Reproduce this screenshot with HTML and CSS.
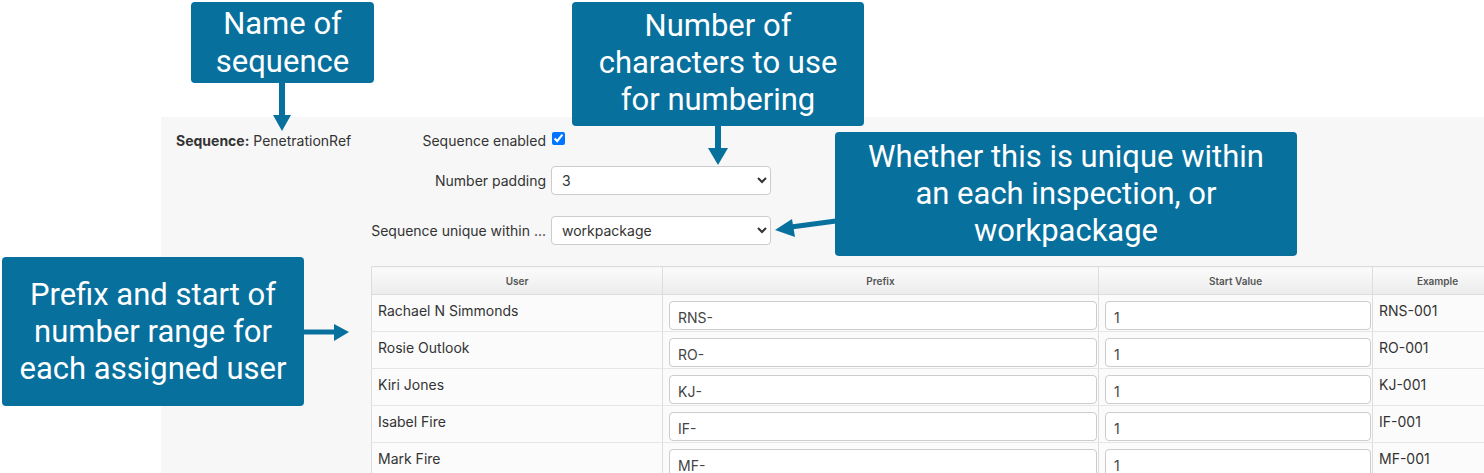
FILE: index.html
```html
<!DOCTYPE html>
<html lang="en">

<head>
    <meta charset="UTF-8">
    <title>Sequence settings</title>
    <link rel="stylesheet" href="styles.css">
</head>

<body>
    <div class="page">
        <!-- sequence panel -->
        <section class="panel">
            <div class="seq-name"><b>Sequence:</b> PenetrationRef</div>

            <div class="seq-form">
                <div class="form-row row-check">
                    <label>Sequence enabled</label>
                    <div><input type="checkbox" class="check" checked></div>
                </div>
                <div class="form-row">
                    <label>Number padding</label>
                    <select class="select">
                        <option>3</option>
                    </select>
                </div>
                <div class="form-row">
                    <label>Sequence unique within ...</label>
                    <select class="select">
                        <option>workpackage</option>
                    </select>
                </div>

                <table class="user-table">
                    <colgroup>
                        <col style="width: 291px">
                        <col style="width: 436px">
                        <col style="width: 274px">
                        <col style="width: 130px">
                    </colgroup>
                    <thead>
                        <tr>
                            <th>User</th>
                            <th>Prefix</th>
                            <th>Start Value</th>
                            <th>Example</th>
                        </tr>
                    </thead>
                    <tbody id="user-rows">
                    </tbody>
                </table>
            </div>
        </section>
    </div>

    <!-- callouts -->
    <div class="callout callout-name">Name of<br>sequence</div>
    <div class="callout callout-padding">Number of<br>characters to use<br>for numbering</div>
    <div class="callout callout-unique">Whether this is unique within<br>an each inspection, or<br>workpackage</div>
    <div class="callout callout-prefix">Prefix and start of<br>number range for<br>each assigned user</div>

    <svg class="arrows" width="1484" height="473" viewBox="0 0 1484 473">
        <g fill="#08709d" stroke="#08709d">
            <line x1="282" y1="83" x2="282" y2="116" stroke-width="6" />
            <polygon points="273,115 291,115 282,131" stroke="none" />

            <line x1="718" y1="126" x2="718" y2="149" stroke-width="6" />
            <polygon points="708,148 728,148 718,165" stroke="none" />

            <line x1="836" y1="221" x2="791" y2="227" stroke-width="5" />
            <polygon points="775,230 792,219 795,237" stroke="none" />

            <line x1="304" y1="332" x2="335" y2="332" stroke-width="5" />
            <polygon points="334,324 334,341 349,332" stroke="none" />
        </g>
    </svg>

    <script>
        const users = [
            { name: "Rachael N Simmonds", prefix: "RNS-" },
            { name: "Rosie Outlook", prefix: "RO-" },
            { name: "Kiri Jones", prefix: "KJ-" },
            { name: "Isabel Fire", prefix: "IF-" },
            { name: "Mark Fire", prefix: "MF-" }
        ];

        const body = document.getElementById("user-rows");
        users.forEach(u => {
            const row = document.createElement("tr");
            row.innerHTML = `
                <td>${u.name}</td>
                <td class="cell-input"><input type="text" class="text-input" value="${u.prefix}"></td>
                <td class="cell-input"><input type="text" class="text-input" value="1"></td>
                <td>${u.prefix}001</td>
            `;
            body.appendChild(row);
        });
    </script>
</body>

</html>
```

FILE: styles.css
```css
/* base */
html,
body {
    margin: 0;
    padding: 0;
    height: 473px;
    overflow: hidden;
}

body {
    position: relative;
    font-family: Inter, "Liberation Sans", sans-serif;
    font-size: 14px;
    color: #333;
    background-color: #fff;
}

.page {
    padding-top: 117px;
}

/* panel */
.panel {
    display: flex;
    margin-left: 161px;
    height: 356px;
    background-color: #f7f7f7;
}

.seq-name {
    flex: 0 0 195px;
    padding: 14px 0 0 15px;
    font-size: 14px;
    line-height: 20px;
    white-space: nowrap;
}

.seq-name b {
    font-weight: 700;
}

.seq-form {
    padding-top: 13px;
}

.form-row {
    display: grid;
    grid-template-columns: 175px 220px;
    column-gap: 5px;
    align-items: center;
    height: 29px;
    margin-bottom: 21px;
}

.form-row label {
    text-align: right;
    white-space: nowrap;
    font-size: 14px;
}

.row-check {
    height: 20px;
    margin-bottom: 16px;
}

.check {
    display: block;
    width: 13px;
    height: 13px;
    margin: 0 0 3px 1px;
}

.select {
    width: 220px;
    height: 29px;
    padding: 0 6px;
    border: 1px solid #ccc;
    border-radius: 4px;
    background-color: #fff;
    font-family: inherit;
    font-size: 14px;
    color: #333;
}

/* user table */
.user-table {
    table-layout: fixed;
    width: 1131px;
    border-collapse: collapse;
    background-color: #fbfbfb;
}

.user-table th {
    height: 27px;
    padding: 0;
    font-size: 10px;
    font-weight: 600;
    color: #555;
    background: linear-gradient(#fbfbfb, #ececec);
    border: 1px solid #ddd;
}

.user-table td {
    height: 37px;
    padding: 7px 6px 0;
    vertical-align: top;
    line-height: 18px;
    white-space: nowrap;
    border-left: 1px solid #ddd;
    border-bottom: 1px solid #e6e6e6;
    box-sizing: border-box;
}

.user-table td.cell-input {
    padding: 6px 1px 0 6px;
}

.text-input {
    display: block;
    width: 100%;
    height: 29px;
    box-sizing: border-box;
    padding: 4px 8px 0;
    border: 1px solid #ccc;
    border-radius: 4px;
    background-color: #fff;
    font-family: inherit;
    font-size: 14px;
    color: #444;
}

/* callouts */
.callout {
    position: absolute;
    display: flex;
    align-items: center;
    justify-content: center;
    box-sizing: border-box;
    background-color: #08709d;
    border-radius: 4px;
    color: #fff;
    font-family: Roboto, "Liberation Sans", sans-serif;
    font-size: 31px;
    line-height: 37px;
    text-align: center;
    white-space: nowrap;
}

.callout-name {
    left: 191px;
    top: 2px;
    width: 183px;
    height: 81px;
    line-height: 38px;
}

.callout-padding {
    left: 572px;
    top: 2px;
    width: 292px;
    height: 124px;
    padding-bottom: 4px;
}

.callout-unique {
    left: 835px;
    top: 132px;
    width: 462px;
    height: 124px;
    padding-bottom: 2px;
}

.callout-prefix {
    left: 2px;
    top: 257px;
    width: 302px;
    height: 149px;
}

.arrows {
    position: absolute;
    left: 0;
    top: 0;
    pointer-events: none;
}
```
